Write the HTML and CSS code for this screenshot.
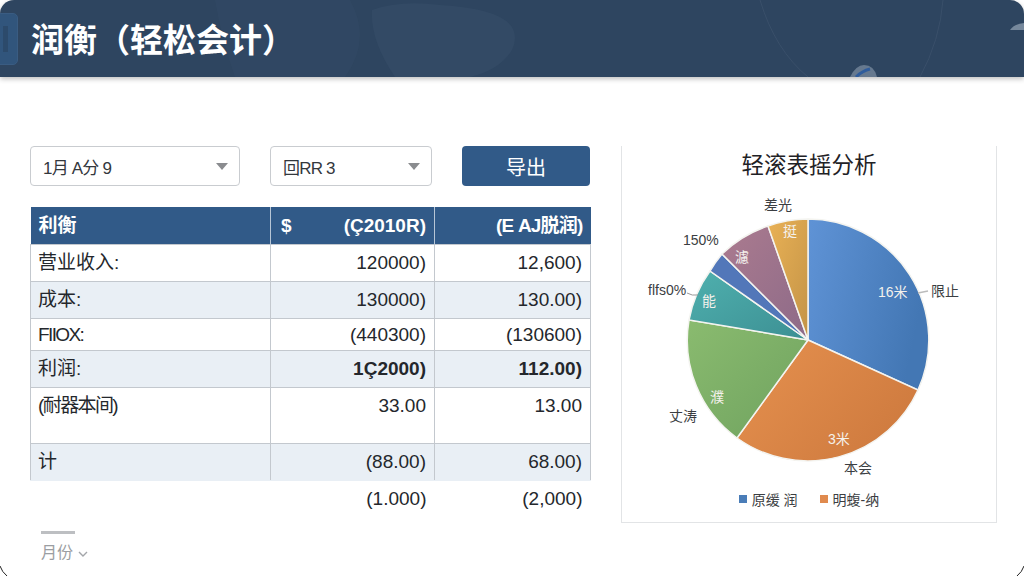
FILE: index.html
```html
<!DOCTYPE html>
<html lang="zh-CN">
<head>
    <meta charset="UTF-8">
    <meta name="viewport" content="width=device-width, initial-scale=1.0">
    <title>润衡（轻松会计）</title>
    <link rel="stylesheet" href="styles.css">
</head>
<body>
    <!-- 顶部标题栏 -->
    <header class="topbar">
        <svg class="topbar-art" viewBox="0 0 1024 77" preserveAspectRatio="none" aria-hidden="true">
            <path d="M215 0 L350 0 Q372 40 345 77 L235 77 Q222 40 215 0Z" fill="#3a506c" opacity="0.22"/>
            <path d="M372 10 Q400 0 440 5 Q530 10 512 50 Q500 70 470 77 L395 77 Q370 40 372 10Z" fill="#3f5570" opacity="0.3"/>
            <path d="M760 0 Q775 50 808 77" fill="none" stroke="#4a6079" stroke-width="1" opacity="0.4"/>
            <path d="M943 0 Q940 40 920 77" fill="none" stroke="#4a6079" stroke-width="1" opacity="0.4"/>
            <path d="M850 77 Q856 65 864 65 Q874 65 877 77Z" fill="#66798f"/>
            <path d="M856 77 Q862 71 870 69" fill="none" stroke="#2f5c9c" stroke-width="3"/>
            <path d="M1010 30 Q1014 24 1024 23 L1024 30Z" fill="#76889c"/>
        </svg>
        <span class="topbar-tab"><i class="tab-bar"></i></span>
        <h1>润衡（轻松会计）</h1>
    </header>

    <main class="content">
        <section class="left">
            <!-- 筛选条 -->
            <div class="toolbar">
                <div class="select select-month">1月 A分 9<i class="caret"></i></div>
                <div class="select select-type">回RR 3<i class="caret"></i></div>
                <button class="export">导出</button>
            </div>

            <!-- 利润表 -->
            <table class="report">
                <colgroup>
                    <col class="col-name">
                    <col class="col-a">
                    <col class="col-b">
                </colgroup>
                <thead>
                    <tr>
                        <th class="name">利衡</th>
                        <th class="num"><span class="cur">$</span>(Ç2010R)</th>
                        <th class="num tight">(E ΑJ脱润)</th>
                    </tr>
                </thead>
                <tbody>
                    <tr class="h37"><td>营业收入:</td><td class="num">120000)</td><td class="num">12,600)</td></tr>
                    <tr class="h37 shade"><td>成本:</td><td class="num">130000)</td><td class="num">130.00)</td></tr>
                    <tr class="h32"><td class="squeeze">FIIOX:</td><td class="num">(440300)</td><td class="num">(130600)</td></tr>
                    <tr class="h37 shade strong"><td>利润:</td><td class="num">1Ç2000)</td><td class="num">112.00)</td></tr>
                    <tr class="h56"><td class="squeeze">(耐器本间)</td><td class="num">33.00</td><td class="num">13.00</td></tr>
                    <tr class="h37 shade last"><td>计</td><td class="num">(88.00)</td><td class="num">68.00)</td></tr>
                    <tr class="extra"><td></td><td class="num">(1.000)</td><td class="num">(2,000)</td></tr>
                </tbody>
            </table>

            <div class="month-tab">
                <span class="month-line"></span>
                <span class="month-label">月份
                    <svg width="12" height="8" viewBox="0 0 12 8"><path d="M2 2 L6 6 L10 2" fill="none" stroke="#a3a6aa" stroke-width="1.4"/></svg>
                </span>
            </div>
        </section>

        <!-- 饼图 -->
        <aside class="chart">
            <h2>轻滚表摇分析</h2>
            <svg class="pie" width="374" height="297" viewBox="622 195 374 297">
                <defs>
                    <linearGradient id="gBlue" x1="0" y1="0" x2="1" y2="0.3"><stop offset="0" stop-color="#5f93d6"/><stop offset="1" stop-color="#4377b4"/></linearGradient>
                    <linearGradient id="gOrange" x1="0" y1="0" x2="1" y2="0.6"><stop offset="0" stop-color="#e6914f"/><stop offset="1" stop-color="#cf7b3f"/></linearGradient>
                    <linearGradient id="gGreen" x1="0" y1="0" x2="1" y2="1"><stop offset="0" stop-color="#8abb6f"/><stop offset="1" stop-color="#6fa25f"/></linearGradient>
                    <linearGradient id="gTeal" x1="0" y1="0" x2="1" y2="1"><stop offset="0" stop-color="#4fb0ae"/><stop offset="1" stop-color="#3c8f93"/></linearGradient>
                    <linearGradient id="gMauve" x1="0" y1="0" x2="1" y2="1"><stop offset="0" stop-color="#ab7b8f"/><stop offset="1" stop-color="#8d6a88"/></linearGradient>
                    <linearGradient id="gGold" x1="0" y1="0" x2="1" y2="1"><stop offset="0" stop-color="#e9b155"/><stop offset="1" stop-color="#c39347"/></linearGradient>
                </defs>
                <g stroke="#f4f4f0" stroke-width="1.5">
                    <path d="M808 340 L808 219 A121 121 0 0 1 918 390 Z" fill="url(#gBlue)"/>
                    <path d="M808 340 L918 390 A121 121 0 0 1 737 438 Z" fill="url(#gOrange)"/>
                    <path d="M808 340 L737 438 A121 121 0 0 1 689 320 Z" fill="url(#gGreen)"/>
                    <path d="M808 340 L689 320 A121 121 0 0 1 710 271 Z" fill="url(#gTeal)"/>
                    <path d="M808 340 L710 271 A121 121 0 0 1 722 254 Z" fill="#5277b9"/>
                    <path d="M808 340 L722 254 A121 121 0 0 1 768 226 Z" fill="url(#gMauve)"/>
                    <path d="M808 340 L768 226 A121 121 0 0 1 808 219 Z" fill="url(#gGold)"/>
                </g>
                <path d="M687 293 Q692 296 698 295" fill="none" stroke="#999" stroke-width="1"/>
                <path d="M918 293 L928 291" fill="none" stroke="#bbb" stroke-width="1.5"/>
                <g class="pie-in">
                    <text x="878" y="297">16米</text>
                    <text x="828" y="444">3米</text>
                    <text x="710" y="402">濮</text>
                    <text x="702" y="306">能</text>
                    <text x="735" y="262">濾</text>
                    <text x="783" y="236">挺</text>
                </g>
                <g class="pie-out">
                    <text x="764" y="210">差光</text>
                    <text x="683" y="245">150%</text>
                    <text x="648" y="295">flfs0%</text>
                    <text x="931" y="296">限止</text>
                    <text x="669" y="421">丈涛</text>
                    <text x="844" y="473">本会</text>
                </g>
            </svg>
            <div class="legend">
                <span class="key"><i class="dot dot-blue"></i>原缓 润</span>
                <span class="key"><i class="dot dot-orange"></i>明蝮-纳</span>
            </div>
        </aside>
    </main>

    <!-- 底部两角的细线 -->
    <svg class="corner corner-left" width="8" height="10" viewBox="0 0 8 10"><path d="M0 0 Q2 6 7 10" fill="none" stroke="#222" stroke-width="1"/></svg>
    <svg class="corner corner-right" width="8" height="10" viewBox="0 0 8 10"><path d="M8 0 Q6 6 1 10" fill="none" stroke="#222" stroke-width="1"/></svg>
</body>
</html>
```

FILE: styles.css
```css
/* 页面 */
html, body {
    margin: 0;
    height: 100%;
}
body {
    position: relative;
    width: 1024px;
    height: 576px;
    overflow: hidden;
    background: #fff;
    color: #2b2f36;
    font-family: "Liberation Sans", "Noto Sans CJK SC", sans-serif;
}

/* 标题栏 */
.topbar {
    position: relative;
    height: 77px;
    overflow: hidden;
    display: flex;
    align-items: center;
    background: #2e4560;
    border-radius: 14px 14px 0 0;
    box-shadow: 0 2px 5px rgba(0, 0, 0, 0.25);
}
.topbar-art {
    position: absolute;
    left: 0;
    top: 0;
    width: 100%;
    height: 100%;
}
.topbar-tab {
    position: absolute;
    left: -6px;
    top: 13px;
    width: 22px;
    height: 50px;
    background: #31557c;
    border: 1px solid #3a5c82;
    border-radius: 5px;
}
.tab-bar {
    position: absolute;
    left: 8px;
    top: 12px;
    width: 5px;
    height: 26px;
    background: #2c4a6b;
}
.topbar h1 {
    position: relative;
    margin: 3px 0 0 31px;
    color: #fff;
    font-size: 33px;
    font-weight: 700;
    line-height: 1;
}

/* 内容 */
.content {
    display: flex;
    align-items: flex-start;
    padding: 69px 27px 0 30px;
}
.left {
    width: 560px;
}

/* 筛选条 */
.toolbar {
    display: flex;
    gap: 30px;
    height: 40px;
}
.select {
    display: flex;
    align-items: center;
    justify-content: space-between;
    box-sizing: border-box;
    padding: 0 11px 0 12px;
    background: #fff;
    border: 1px solid #c9ccd0;
    border-radius: 4px;
    font-size: 17px;
    letter-spacing: -0.8px;
    color: #33373d;
}
.select-month {
    width: 210px;
}
.select-type {
    width: 162px;
}
.caret {
    width: 0;
    height: 0;
    border-left: 6px solid transparent;
    border-right: 6px solid transparent;
    border-top: 7px solid #8a8c8f;
}
.export {
    width: 128px;
    border: none;
    border-radius: 4px;
    background: #315a88;
    color: #fff;
    font-family: inherit;
    font-size: 20px;
}

/* 表格 */
.report {
    width: 560px;
    margin-top: 21px;
    table-layout: fixed;
    border-collapse: collapse;
    font-size: 19px;
    line-height: 22px;
}
.col-name {
    width: 240px;
}
.col-a {
    width: 164px;
}
.col-b {
    width: 156px;
}
.report th {
    height: 37px;
    padding: 0 8px;
    background: #315a88;
    color: #fff;
    font-size: 19px;
    font-weight: 700;
    border-left: 1px solid #b7c6d6;
    text-align: left;
}
.report th:first-child {
    border-left: none;
}
.report th.num {
    text-align: right;
}
.report th.tight {
    letter-spacing: -0.8px;
}
.cur {
    float: left;
    margin-left: 2px;
}
.report td {
    padding: 0 8px 0 7px;
    border: 1px solid #c3c8ce;
    color: #24272c;
}
.report .num {
    text-align: right;
}
.report .squeeze {
    letter-spacing: -1.6px;
}
.report td.num {
    padding-right: 8px;
}
.h37 td {
    height: 36px;
}
.h32 td {
    height: 31px;
}
.h56 td {
    height: 48px;
    padding-top: 7px;
    vertical-align: top;
}
.shade td {
    background: #e9eff5;
}
.report .h32 td {
    border-top: none;
}
.strong td.num {
    font-weight: 700;
}
.report .last td {
    border-bottom-color: #e9eff5;
}
.report .extra td {
    height: 36px;
    border-left: none;
    border-right: none;
    border-bottom: none;
    border-top: 1px solid #e9eff5;
}

/* 月份标签 */
.month-tab {
    display: flex;
    flex-direction: column;
    margin: 14px 0 0 11px;
}
.month-line {
    width: 34px;
    height: 3px;
    background: #bdbfc2;
}
.month-label {
    margin-top: 9px;
    color: #9b9ea2;
    font-size: 16px;
    line-height: 20px;
}

/* 饼图面板 */
.chart {
    box-sizing: border-box;
    width: 376px;
    height: 377px;
    margin-left: 31px;
    border: 1px solid #e2e4e6;
    border-top: none;
    text-align: center;
}
.chart h2 {
    margin: 6px 0 0;
    height: 28px;
    font-size: 22.5px;
    font-weight: 400;
    line-height: 28px;
    color: #1f2226;
}
.pie {
    display: block;
    margin-top: 15px;
}
.pie text {
    font-size: 14px;
    font-family: "Liberation Sans", "Noto Sans CJK SC", sans-serif;
}
.pie-in text {
    fill: #f4f1ec;
}
.pie-out text {
    fill: #3b3e42;
}
.legend {
    display: flex;
    justify-content: center;
    gap: 22px;
    margin-top: -3px;
    font-size: 14px;
    color: #3b3e42;
}
.key {
    display: flex;
    align-items: center;
    gap: 5px;
}
.dot {
    width: 8px;
    height: 8px;
}
.dot-blue {
    background: #4a7db8;
}
.dot-orange {
    background: #e08a4e;
}

/* 底部两角 */
.corner {
    position: absolute;
    bottom: 0;
}
.corner-left {
    left: 0;
}
.corner-right {
    right: 0;
}
```
